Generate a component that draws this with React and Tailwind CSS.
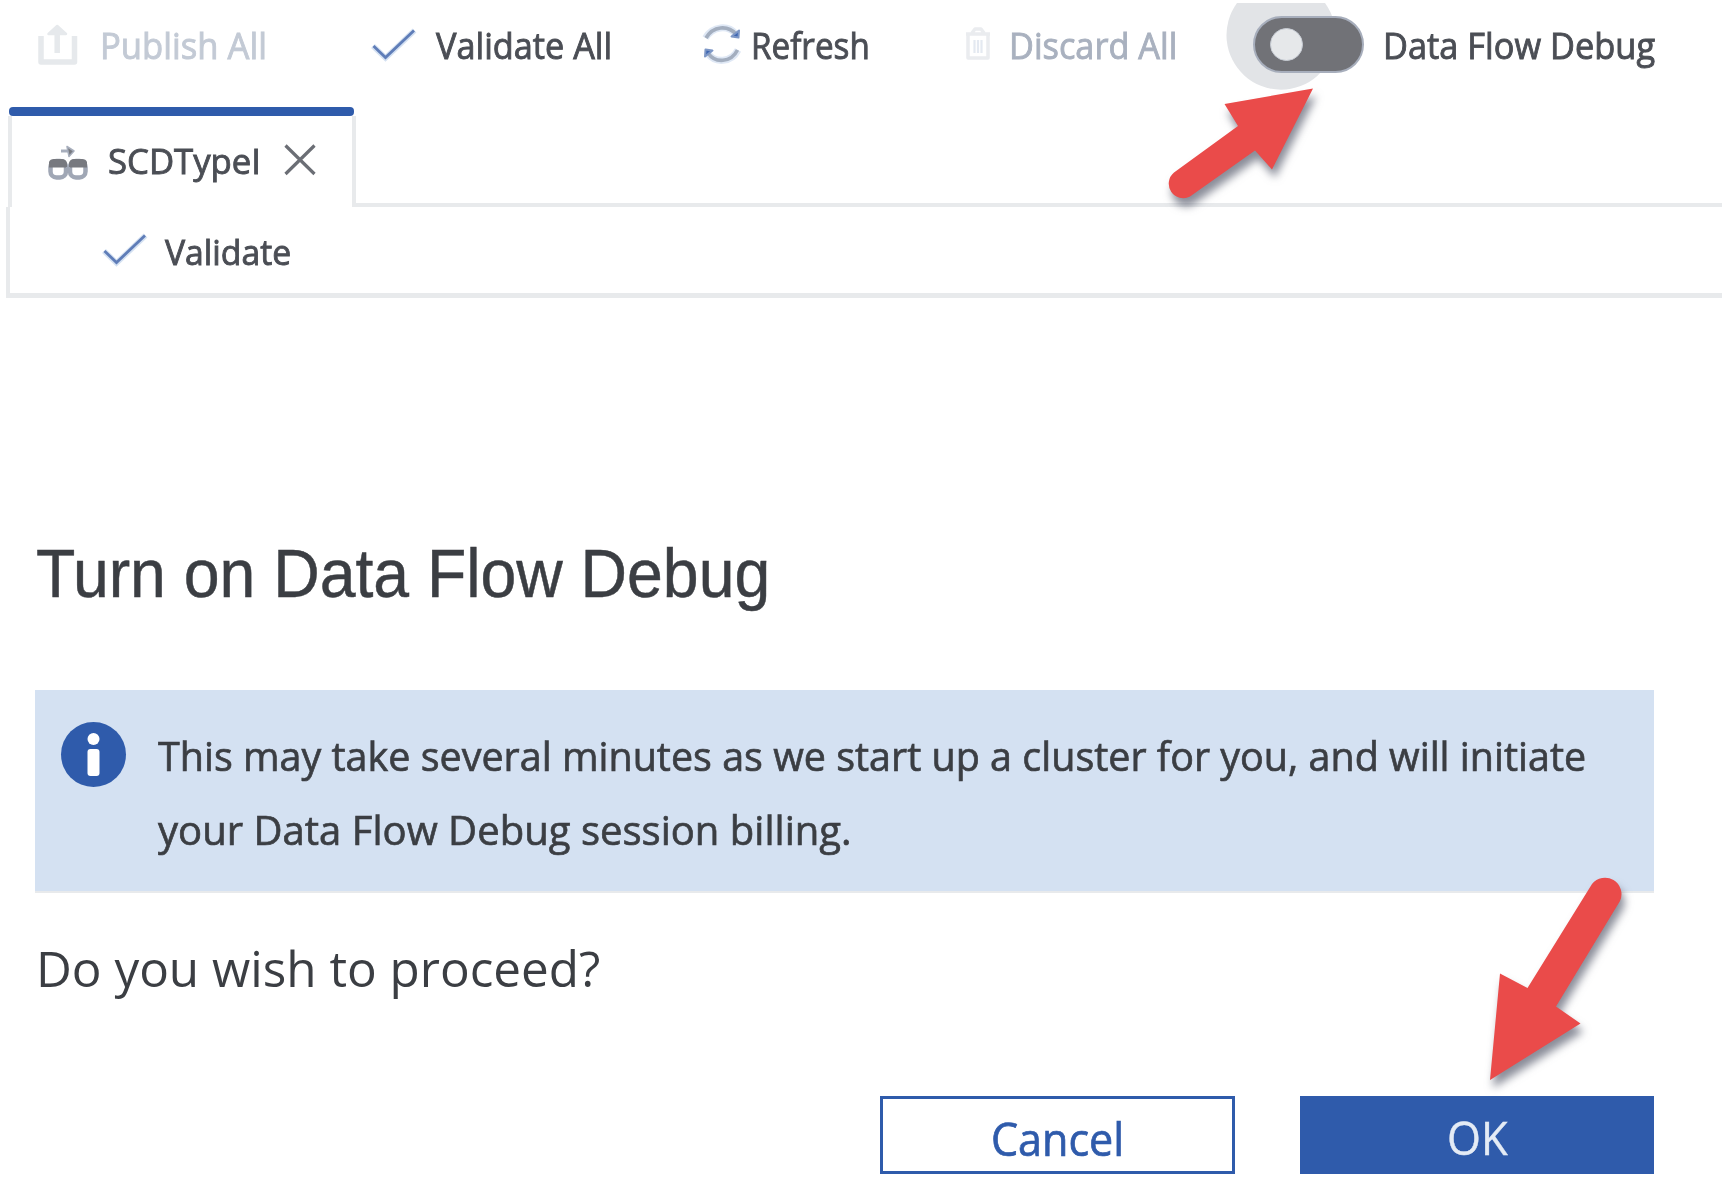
import React from "react";

/* Single-line label whose glyphs are condensed horizontally from the left edge. */
function Label({ className = "", children }) {
  return <span className={"block whitespace-nowrap origin-left " + className}>{children}</span>;
}

function PublishIcon() {
  return (
    <svg className="ml-[36px] h-[46px] w-[44px] shrink-0" viewBox="37 21 44 46" fill="none" stroke="#e6e9ec" strokeWidth="5.500" strokeLinejoin="round">
      <path d="M42 36V62H75.500V36M58.200 30V53" />
      <path d="M58.200 26L67 34H49.500Z" fill="#e6e9ec" strokeWidth="2.500" />
    </svg>
  );
}

function CheckIcon({ className }) {
  return (
    <svg className={"h-[34px] w-[46px] shrink-0 " + className} viewBox="0 0 46 34" fill="none">
      <path d="M2 18L14.5 30L43.5 2.5" stroke="#d4e1f2" strokeWidth="5.500" />
      <path d="M2.5 18L14.5 29.5L43 2.5" stroke="#5f7db8" strokeWidth="2.800" />
    </svg>
  );
}

function RefreshIcon() {
  return (
    <svg className="ml-[91px] h-[44px] w-[40px] shrink-0" viewBox="0 0 40 44" fill="none">
      <g stroke="#dfe8f5" strokeWidth="7">
        <path d="M3.500 16C11 3.500 26 3 34 12" />
        <path d="M36 28C29 41 13 41.500 5.500 31" />
      </g>
      <g stroke="#a3aebf" strokeWidth="3.600">
        <path d="M4 16C11 3.500 26 3 34 12" />
        <path d="M35.500 28C29 41 13 41.500 6 31" />
      </g>
      <path d="M29.500 14.500L36.500 15.500L37 8.500Z M10.500 28.500L3.500 27.500L3 34.500Z" fill="#3f67b1" stroke="#7d97c6" strokeWidth="2" strokeLinejoin="round" />
    </svg>
  );
}

function TrashIcon() {
  return (
    <svg className="ml-[95px] h-[36px] w-[28px] shrink-0" viewBox="0 0 28 36" fill="none" stroke="#eaecef" strokeWidth="3.500" strokeLinejoin="round">
      <path d="M2 8H26M8 7L11 3H17L20 7M4 9V32H24V9" />
      <path d="M10.500 14V27M14 14V27M17.500 14V27" strokeWidth="2.200" stroke="#e4e9f1" />
    </svg>
  );
}

function DataFlowIcon() {
  return (
    <svg className="ml-[34px] h-[38px] w-[44px] shrink-0" viewBox="46 142 44 38" fill="none">
      <path d="M61 150H69" stroke="#a7aebc" strokeWidth="3" />
      <path d="M67 145.500L74 150L69 155.500Z" fill="#77797f" stroke="#a7aebc" strokeWidth="1.500" strokeLinejoin="round" />
      <rect x="50.500" y="160" width="15.500" height="16.500" rx="6" stroke="#a0a7b5" strokeWidth="4.500" />
      <rect x="70" y="160" width="15.500" height="16.500" rx="6" stroke="#a0a7b5" strokeWidth="4.500" />
      <path d="M49 166.500V161Q50 158 54 158H62Q66 158 67 162V166.500ZM69 166.500V162Q70 158 74 158H82Q86 158 87 161V166.500Z" fill="#77797f" />
      <path d="M66 168H70" stroke="#a0a7b5" strokeWidth="4" />
    </svg>
  );
}

function CloseIcon() {
  return (
    <svg className="-mt-[4px] ml-[23px] h-[34px] w-[34px] shrink-0" viewBox="0 0 34 34">
      <path d="M2.500 2.500L31.500 31M31.500 2.500L2.500 31" stroke="#6b6e75" strokeWidth="3.200" />
    </svg>
  );
}

function DebugSwitch() {
  return (
    <div className="relative ml-[67px] h-[57px] w-[111px] shrink-0 rounded-full border-2 border-[#a7aebc] bg-[#717277]">
      <svg className="absolute -left-[32px] -top-[18px] -z-10 h-[92px] w-[116px]" viewBox="1223 0 116 92">
        <path d="M1237 3H1325A54.500 54.500 0 1 1 1237 3Z" fill="#e2e4e7" />
      </svg>
      <div className="ml-[15px] mt-[10px] h-[33px] w-[33px] rounded-full border border-[#c8cdd5] bg-[#e6e8ea]" />
    </div>
  );
}

const strong = "[-webkit-text-stroke:0.9px_currentColor] ";

function Toolbar() {
  return (
    <header className="relative z-0 flex h-[88px] items-center text-[36px] leading-[36px] text-[#4b4e55]">
      <PublishIcon />
      <div className="ml-[20px] mt-[3px] w-[165px] text-[#c3cad5]"><Label className={strong + "scale-x-[0.962]"}>Publish All</Label></div>
      <CheckIcon className="ml-[106px] mt-[2px]" />
      <div className="ml-[19px] mt-[3px] w-[175px]"><Label className={strong + "scale-x-[0.952]"}>Validate All</Label></div>
      <RefreshIcon />
      <div className="ml-[9px] mt-[3px] w-[118px]"><Label className={strong + "scale-x-[0.923]"}>Refresh</Label></div>
      <TrashIcon />
      <div className="ml-[17px] mt-[3px] w-[177px] text-[#a9b1bf]"><Label className={strong + "scale-x-[0.953]"}>Discard All</Label></div>
      <DebugSwitch />
      <div className="ml-[19px] mt-[3px] w-[280px]"><Label className={strong + "scale-x-[0.955]"}>Data Flow Debug</Label></div>
    </header>
  );
}

function TabStrip() {
  return (
    <section className="mt-[19px] w-[1722px] text-[35px] leading-[36px] text-[#4b4e55]">
      <div className="flex">
        <div className="ml-[8px] w-[348px]">
          <div className="ml-[1px] h-[9px] w-[345px] rounded-sm bg-[#2f5bab]" />
          <div className="flex h-[91px] items-center border-x-4 border-[#e8eaec]">
            <DataFlowIcon />
            <div className="-mt-[2px] ml-[18px] w-[152px]"><Label className={strong + "scale-x-[0.992]"}>SCDTypeI</Label></div>
            <CloseIcon />
          </div>
        </div>
        <div className="-ml-1 flex-1 border-b-4 border-[#e8eaec]" />
      </div>
      <div className="ml-[6px] flex h-[91px] items-center border-b-[5px] border-l-4 border-[#e8eaec]">
        <CheckIcon className="ml-[92px]" />
        <div className="ml-[17px] mt-[3px]"><Label className={strong + "scale-x-[0.963]"}>Validate</Label></div>
      </div>
    </section>
  );
}

function InfoBanner() {
  return (
    <div className="mt-[79px] flex h-[203px] items-start border-b-2 border-[#e8eaec] bg-[#d4e1f2] pt-[28px] text-[41px] leading-[74px] text-[#3b3e43]">
      <svg className="ml-[25px] mt-[3px] h-[67px] w-[67px] shrink-0" viewBox="0 0 67 67">
        <circle cx="33.500" cy="33.500" r="32.500" fill="#2f5bab" />
        <circle cx="33.500" cy="18" r="6" fill="#fff" />
        <rect x="27.500" y="28" width="12" height="27" rx="3" fill="#fff" />
      </svg>
      <div className="ml-[31px]">
        <Label className="scale-x-[0.963] [-webkit-text-stroke:0.7px_currentColor]">This may take several minutes as we start up a cluster for you, and will initiate</Label>
        <Label className="w-max scale-x-[0.977] [-webkit-text-stroke:0.7px_currentColor]">your Data Flow Debug session billing.</Label>
      </div>
    </div>
  );
}

function DebugDialog() {
  return (
    <section className="ml-[35px] mt-[238px] w-[1619px] text-[#3b3e43]">
      <h1 className="ml-px h-[75px] text-[68px] leading-[75px] [font-family:'Liberation_Sans',Arial,sans-serif]">
        <Label className="w-max scale-x-[0.946] [-webkit-text-stroke:0.5px_currentColor]">Turn on Data Flow Debug</Label>
      </h1>
      <InfoBanner />
      <p className="ml-px mt-[45px] h-[60px] text-[50px] leading-[60px]">
        <Label className="w-max scale-x-[0.988]">Do you wish to proceed?</Label>
      </p>
      <div className="mt-[98px] flex justify-end gap-[65px] text-[45px] leading-[45px]">
        <button className="flex h-[78px] w-[355px] items-center justify-center border-[3px] border-[#2f5bab] bg-white pt-[6px] text-[#2f5bab]">
          <span className="scale-x-[0.958] [-webkit-text-stroke:0.7px_currentColor]">Cancel</span>
        </button>
        <button className="flex h-[78px] w-[354px] items-center justify-center bg-[#2f5bab] pt-[5px] text-[#e4ebf5]">
          <span className="scale-x-[0.970] [-webkit-text-stroke:0.4px_currentColor]">OK</span>
        </button>
      </div>
    </section>
  );
}

/* Red callout arrows that float over the page. */
function Callouts() {
  const shadow = "[filter:drop-shadow(3px_8px_4px_rgba(60,65,85,0.6))]";
  return (
    <svg className={"pointer-events-none absolute left-0 top-0 h-[1177px] w-[1725px] " + shadow} viewBox="0 0 1725 1177" fill="#ea4b4a">
      <path d="M1313 88.500L1272 169.500L1255 150.500L1190 196.500A14.500 14.500 0 0 1 1174 172.500L1238 126L1224.500 104Z" />
      <path d="M1490 1080L1500 973.500L1527.500 988L1592 884A16.500 16.500 0 0 1 1620 901L1556 1006.500L1580.500 1023.500Z" />
    </svg>
  );
}

export default function App() {
  return (
    <main className="relative h-[1177px] w-[1725px] overflow-hidden bg-white [font-family:'Open_Sans','Noto_Sans',sans-serif]">
      <Toolbar />
      <TabStrip />
      <DebugDialog />
      <Callouts />
    </main>
  );
}
